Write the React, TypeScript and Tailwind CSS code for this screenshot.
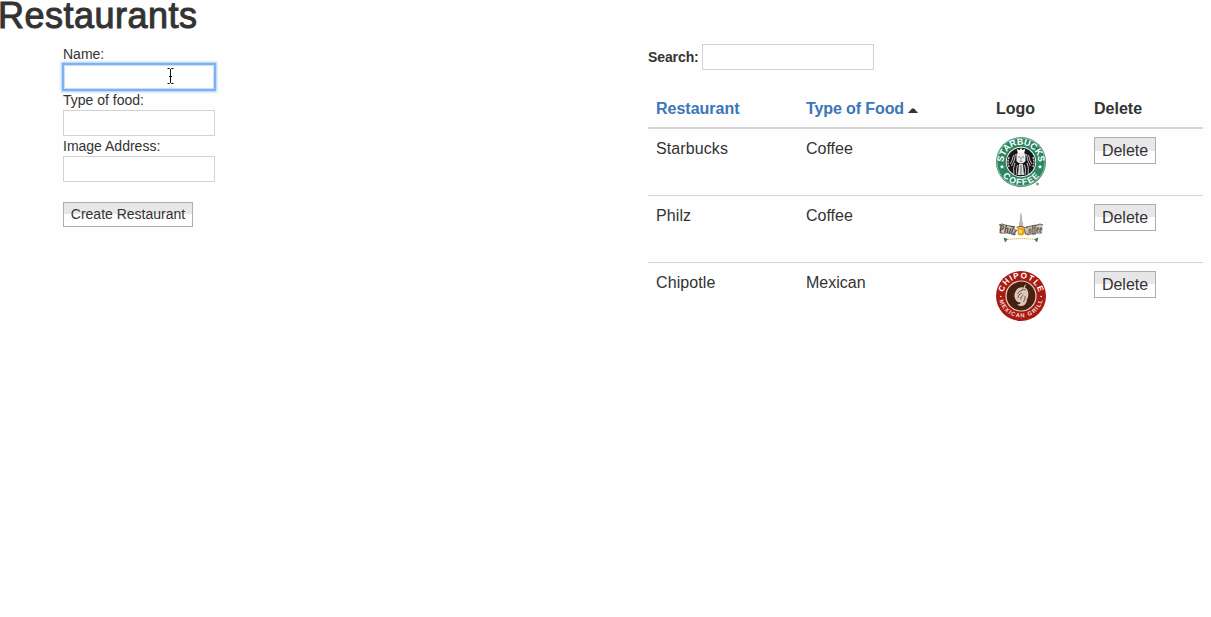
import React from "react";

function StarbucksLogo() {
  return (
    <svg width="50" height="50" viewBox="0 0 50 50" className="block">
      <defs>
        <path id="sb-top" d="M8 29a17.4 17.4 0 1 1 34 0" />
        <path id="sb-bottom" d="M2 25a23 23 0 0 0 46 0" />
      </defs>
      <circle cx="25" cy="25" r="25" fill="#2a8560" />
      <circle cx="25" cy="25" r="24" fill="none" stroke="#b5d6c8" strokeWidth="0.7" />
      <circle cx="25" cy="25" r="15.2" fill="#f4f8f6" />
      <circle cx="25" cy="25" r="14.3" fill="#171717" />
      <path d="M20.5 17q4.500-4 9 0l0 7q-4.500 5-9 0z" fill="#eee" />
      <path d="M25 10.500l1.200 2.500 3-1-1 4h-6.400l-1-4 3 1z" fill="#fff" />
      <path d="M19.500 17q-1 8-4 12M30.500 17q1 8 4 12M17.500 18q-1 6-3.500 9M32.500 18q1 6 3.500 9M19 26q-2.500 5-1 11M31 26q2.500 5 1 11M21.500 28q-2 5-.5 10M28.500 28q2 5 .5 10" stroke="#ccc" strokeWidth="0.9" fill="none" />
      <path d="M23 27h4l1 11h-6z" fill="#ddd" />
      <path d="M22.200 20h1.800m2 0h1.800M25 20.500v2M23.500 24.200h3M25 28v10" stroke="#333" strokeWidth="0.7" />
      <path d="M13 20q-2 5 0 10M37 20q2 5 0 10" stroke="#ccc" strokeWidth="1.4" strokeDasharray="2 .8" fill="none" />
      <text fill="#fff" fontSize="9" fontWeight="700" className="font-['Liberation_Sans',sans-serif]" textAnchor="middle">
        <textPath href="#sb-top" startOffset="50%" textLength="54">STARBUCKS</textPath>
      </text>
      <text fill="#fff" fontSize="8.8" fontWeight="700" className="font-['Liberation_Sans',sans-serif]" textAnchor="middle">
        <textPath href="#sb-bottom" startOffset="50%" textLength="42">COFFEE</textPath>
      </text>
      <path d="M6 27.500l.7 1.400 1.500.2-1.100 1 .3 1.500-1.400-.7-1.400.7.3-1.500-1.100-1 1.500-.2zM44 27.500l.7 1.400 1.500.2-1.100 1 .3 1.500-1.400-.7-1.400.7.3-1.500-1.100-1 1.500-.2z" fill="#fff" />
      <circle cx="41.500" cy="47" r="1.100" fill="#aaa" stroke="#777" strokeWidth="0.7" />
    </svg>
  );
}

function PhilzLogo() {
  return (
    <svg width="50" height="50" viewBox="0 0 50 50" className="block">
      <defs>
        <path id="pz-left" d="M3 28.500q9-.5 17 2.500" />
        <path id="pz-right" d="M29 31q8-3 18-2.500" />
      </defs>
      <path d="M3 21l4-1 2 1 10 2 1 8q-8-4-16-3l-1-2 1-3z" fill="#cfc6ba" />
      <path d="M47 21l-4-1-2 1-11 2-1 8q8-4 17-3l1-2-1-3z" fill="#cfc6ba" />
      <path d="M3 21q3-2 6 0l10 2M4 29q8-1 15 2M47 21q-3-2-6 0l-11 2M46 29q-8-1-15 2" fill="none" stroke="#5b5046" strokeWidth="0.9" />
      <text fontSize="11" fontWeight="700" fontStyle="italic" fill="#443a32" className="font-['Liberation_Serif',serif]">
        <textPath href="#pz-left" textLength="17" lengthAdjust="spacingAndGlyphs">Philz</textPath>
      </text>
      <text fontSize="11" fontWeight="700" fontStyle="italic" fill="#443a32" className="font-['Liberation_Serif',serif]">
        <textPath href="#pz-right" textLength="17.500" lengthAdjust="spacingAndGlyphs">Coffee</textPath>
      </text>
      <path d="M23.500 22q-.7-3 .8-5l.7-7.500.8 7.500q1.500 2 .7 5z" fill="#c2beb7" stroke="#8c887e" strokeWidth="0.5" />
      <path d="M21.300 23.500h7l-.3 7q-3 2-6.200 0z" fill="#eba51c" />
      <path d="M20.700 23.500q4-2 8 0" stroke="#73501c" strokeWidth="1.200" fill="none" />
      <path d="M28.500 25q2 2-.5 3.500" stroke="#c58517" fill="none" />
      <path d="M23 26h3v3h-3z" fill="#ffda55" />
      <path d="M12 35.500q13-2 26 0" stroke="#e4c777" strokeWidth="1.200" strokeDasharray="1.400 .6" fill="none" />
      <path d="M7.500 33.500l4.500 1.500-3 3.500-.5-2zM42.500 33.500l-4.500 1.500 3 3.500.5-2z" fill="#427d51" />
    </svg>
  );
}

function ChipotleLogo() {
  return (
    <svg width="50" height="50" viewBox="0 0 50 50" className="block">
      <defs>
        <path id="ch-top" d="M7.200 27a17.900 17.900 0 1 1 35.600 0" />
        <path id="ch-bottom" d="M2.800 22a22.300 22.300 0 1 0 44.400 0" />
      </defs>
      <circle cx="25" cy="25" r="25" fill="#a81b14" />
      <circle cx="25" cy="25" r="15.600" fill="#e8d6cb" />
      <circle cx="25" cy="25" r="14.400" fill="#48200f" />
      <path d="M30.500 13.500q-2.500 0-2.500 3-6-1-8.500 4-2.500 5 .5 9 2.500 3 5 1.500-1 3-4 2.500 4 3 8 0 2-2 2-5 2-3 1-8-.5-3-3-4 0-1.500 1.500-3z" fill="#d9c9bb" />
      <path d="M21.500 23q2-4 5.500-4M22 27q0-4 4-5M24.500 28.500q0-3 3-4.500M27.500 31q2-3 1.500-6M26 18l4 1" stroke="#75513f" strokeWidth="0.9" fill="none" />
      <text fill="#fff" fontSize="8.200" fontWeight="700" className="font-['Liberation_Sans',sans-serif]" textAnchor="middle">
        <textPath href="#ch-top" startOffset="50%" textLength="48">CHIPOTLE</textPath>
      </text>
      <text fill="#f7dcd5" fontSize="5.800" fontWeight="700" className="font-['Liberation_Sans',sans-serif]" textAnchor="middle">
        <textPath href="#ch-bottom" startOffset="50%" textLength="59">MEXICAN GRILL</textPath>
      </text>
      <circle cx="4.800" cy="25.500" r="0.8" fill="#fff" />
      <circle cx="45.200" cy="25.500" r="0.8" fill="#fff" />
    </svg>
  );
}

const restaurants = [
  { name: "Starbucks", food: "Coffee", logo: <StarbucksLogo /> },
  { name: "Philz", food: "Coffee", logo: <PhilzLogo /> },
  { name: "Chipotle", food: "Mexican", logo: <ChipotleLogo /> },
];

const inputClass = "block h-[26px] w-[152px] border border-[#d2d2d2] bg-white px-1 outline-none";

export default function App() {
  return (
    <div className="min-h-[617px] bg-[#fefefe] font-['Liberation_Sans',Arial,sans-serif] text-sm leading-5 text-[#333]">
      <h1 className="h-11 indent-[-2px] pt-px text-[36px] leading-[30px] tracking-[0.5px] [-webkit-text-stroke:1px_#333]">Restaurants</h1>
      <div className="flex">
        <form className="ml-[63px] w-[585px]" onSubmit={(e) => e.preventDefault()}>
          <label className="block" htmlFor="name">Name:</label>
          <div className="relative w-[152px]">
            <input id="name" className="block h-[26px] w-[152px] border border-[#7eb0f2] bg-white px-1 shadow-[0_0_0_1px_#7eb0f2,0_0_2px_2px_#a9cdfa,inset_0_0_1px_1px_#c5dcfa] outline-none" />
            <svg className="absolute left-[104px] top-[4px]" width="7" height="16" viewBox="0 0 7 16" fill="none" stroke="#111">
              <path d="M.5.5h2l1 1 1-1h2M3.500 1v14M.5 15.500h2l1-1 1 1h2M2 8.500h3" />
            </svg>
          </div>
          <label className="block" htmlFor="food">Type of food:</label>
          <input id="food" className={inputClass} />
          <label className="block" htmlFor="image">Image Address:</label>
          <input id="image" className={inputClass} />
          <button className="mt-5 flex h-[25px] w-[130px] items-start justify-center whitespace-nowrap border border-[#adadad] bg-[linear-gradient(#e7e7e7_50%,#fefefe_50%)] leading-[23px]">Create Restaurant</button>
        </form>
        <section className="w-[555px]">
          <div className="flex h-[26px] items-center">
            <label className="w-[54px] font-bold tracking-[-0.1px]" htmlFor="search">Search:</label>
            <input id="search" className="block h-[26px] w-[172px] border border-[#d2d2d2] bg-white px-1 outline-none" />
          </div>
          <table className="mt-5 w-full table-fixed border-separate border-spacing-0 text-left text-base leading-[22px]">
            <colgroup>
              <col className="w-[150px]" />
              <col className="w-[190px]" />
              <col className="w-[98px]" />
              <col className="w-[117px]" />
            </colgroup>
            <thead>
              <tr className="h-[39px] align-top [&>th]:border-b-2 [&>th]:border-[#d6d6d6] [&>th]:px-2 [&>th]:pt-2">
                <th className="text-[#3b75ba]">Restaurant</th>
                <th>
                  <span className="tracking-[-0.1px] text-[#3b75ba]">Type of Food</span>
                  <svg className="ml-1 inline-block align-[1px]" width="10" height="5" viewBox="0 0 10 5"><path d="M0 5l4-4.500h2l4 4.500z" fill="#333" /></svg>
                </th>
                <th>Logo</th>
                <th>Delete</th>
              </tr>
            </thead>
            <tbody>
              {restaurants.map((r) => (
                <tr key={r.name} className="h-[67px] align-top [&:not(:last-child)>td]:border-b [&>td]:border-[#d6d6d6] [&>td]:px-2 [&>td]:pt-2">
                  <td className="leading-6 tracking-[0.1px]">{r.name}</td>
                  <td className="leading-6">{r.food}</td>
                  <td>{r.logo}</td>
                  <td>
                    <button className="block h-[27px] w-[62px] border border-[#adadad] bg-[linear-gradient(#e7e7e7_50%,#fefefe_50%)] leading-[25px]">Delete</button>
                  </td>
                </tr>
              ))}
            </tbody>
          </table>
        </section>
      </div>
    </div>
  );
}
